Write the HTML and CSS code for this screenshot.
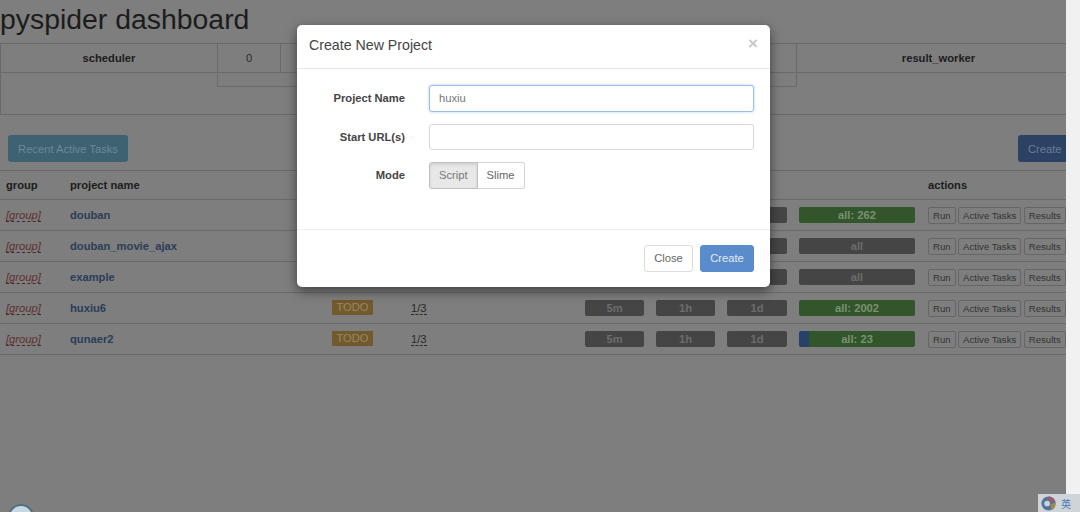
FILE: index.html
```html
<!DOCTYPE html>
<html lang="en">
<head>
<meta charset="utf-8">
<title>pyspider dashboard</title>
<link rel="stylesheet" href="styles.css">
</head>
<body>
<div class="viewport">
  <div class="page">
    <h1 class="title">pyspider dashboard</h1>
    <div class="queues">
      <div class="queue-head">
        <div class="q-name">scheduler</div>
        <div class="q-num">0</div>
        <div class="q-mid"></div>
        <div class="q-name q-last">result_worker</div>
      </div>
      <div class="queue-body">
        <div class="q-sub"></div>
      </div>
    </div>
    <div class="toolbar">
      <button class="btn btn-info">Recent Active Tasks</button>
      <button class="btn btn-primary btn-cut">Create</button>
    </div>
    <div class="projects">
      <div class="row row-head">
        <div>group</div><div>project name</div><div></div><div></div><div></div><div>actions</div>
      </div>
      <div class="row">
        <div><span class="group">[group]</span></div><div class="pname">douban</div>
        <div><span class="todo">TODO</span></div><div><span class="rate">1/3</span></div>
        <div class="bars"><span class="bar">5m</span><span class="bar">1h</span><span class="bar">1d</span><span class="bar bar-all">all: 262</span></div>
        <div class="acts"><span class="act">Run</span><span class="act">Active Tasks</span><span class="act">Results</span></div>
      </div>
      <div class="row">
        <div><span class="group">[group]</span></div><div class="pname">douban_movie_ajax</div>
        <div><span class="todo">TODO</span></div><div><span class="rate">1/3</span></div>
        <div class="bars"><span class="bar">5m</span><span class="bar">1h</span><span class="bar">1d</span><span class="bar bar-wide">all</span></div>
        <div class="acts"><span class="act">Run</span><span class="act">Active Tasks</span><span class="act">Results</span></div>
      </div>
      <div class="row">
        <div><span class="group">[group]</span></div><div class="pname">example</div>
        <div><span class="todo">TODO</span></div><div><span class="rate">1/3</span></div>
        <div class="bars"><span class="bar">5m</span><span class="bar">1h</span><span class="bar">1d</span><span class="bar bar-wide">all</span></div>
        <div class="acts"><span class="act">Run</span><span class="act">Active Tasks</span><span class="act">Results</span></div>
      </div>
      <div class="row">
        <div><span class="group">[group]</span></div><div class="pname">huxiu6</div>
        <div><span class="todo">TODO</span></div><div><span class="rate">1/3</span></div>
        <div class="bars"><span class="bar">5m</span><span class="bar">1h</span><span class="bar">1d</span><span class="bar bar-all">all: 2002</span></div>
        <div class="acts"><span class="act">Run</span><span class="act">Active Tasks</span><span class="act">Results</span></div>
      </div>
      <div class="row">
        <div><span class="group">[group]</span></div><div class="pname">qunaer2</div>
        <div><span class="todo">TODO</span></div><div><span class="rate">1/3</span></div>
        <div class="bars"><span class="bar">5m</span><span class="bar">1h</span><span class="bar">1d</span><span class="bar bar-all bar-split">all: 23</span></div>
        <div class="acts"><span class="act">Run</span><span class="act">Active Tasks</span><span class="act">Results</span></div>
      </div>
    </div>
    <div class="modal">
      <div class="modal-head">
        <div class="modal-title">Create New Project</div>
        <div class="modal-x">×</div>
      </div>
      <div class="modal-body">
        <div class="field"><label class="flabel">Project Name</label><input class="input input-focus" value="huxiu"></div>
        <div class="field"><label class="flabel">Start URL(s)</label><input class="input"></div>
        <div class="field"><label class="flabel">Mode</label>
          <div class="segs"><span class="seg seg-on">Script</span><span class="seg">Slime</span></div>
        </div>
      </div>
      <div class="modal-foot">
        <button class="mbtn mbtn-close">Close</button>
        <button class="mbtn mbtn-primary">Create</button>
      </div>
    </div>
    <svg class="corner-globe" width="30" height="8" viewBox="0 0 30 8"><circle cx="15" cy="13" r="12" fill="#c6d8e2" stroke="#54707e" stroke-width="2"/></svg>
  </div>
  <div class="gutter">
    <div class="ime">
      <svg width="19" height="17" viewBox="0 0 20 16"><circle cx="9" cy="8" r="7.5" fill="#51749c"/><path d="M9 .5a7.5 7.5 0 0 1 6.5 4l-4 3-2.500-3z" fill="#a9556a"/><path d="M11 9l5-2a7.500 7.500 0 0 1-4 8z" fill="#a08a4c"/><circle cx="7.500" cy="8" r="3" fill="#c7d3de"/></svg>
      <span class="ime-t">英</span>
    </div>
  </div>
</div>
</body>
</html>
```
FILE: styles.css
```css
* { box-sizing: border-box; }
html, body { margin: 0; height: 100%; overflow: hidden; }
body { font-family: "Liberation Sans", Arial, sans-serif; font-size: 11.2px; color: #2a2a2a; background: #f1f1f1; }
.viewport { display: flex; width: 1080px; height: 512px; }
.page { position: relative; width: 1066px; height: 512px; background: #7e7e7e; overflow: hidden; flex: none; }
.gutter { flex: 1; background: #f1f1f1; position: relative; }
.title { margin: 0; height: 43px; font-size: 28.4px; font-weight: 400; line-height: 39px; color: #1c1c1c; }
.queues { height: 72px; border-bottom: 1px solid #6a6a6a; border-left: 1px solid #6a6a6a; }
.queue-head { display: flex; height: 30px; border-top: 1px solid #6a6a6a; border-bottom: 1px solid #6a6a6a; }
.q-name { width: 216px; flex: none; display: flex; align-items: center; justify-content: center; font-weight: 700; color: #1c1c1c; }
.q-num { width: 64px; flex: none; border-left: 1px solid #6a6a6a; border-right: 1px solid #6a6a6a; display: flex; align-items: center; justify-content: center; color: #2a2a2a; }
.q-mid { width: 515px; flex: none; }
.q-last { width: 284px; border-left: 1px solid #6a6a6a; }
.queue-body { height: 42px; padding-left: 216px; }
.q-sub { height: 14px; width: 580px; border: 1px solid #6a6a6a; border-top: 0; }
.toolbar { display: flex; justify-content: space-between; padding: 20px 0 0 8px; height: 55px; }
.btn { height: 27px; border: 0; border-radius: 3px; font: 11.2px "Liberation Sans", Arial, sans-serif; padding: 0; }
.btn-info { width: 120px; background: #3f6272; color: #6a8897; }
.btn-primary { background: #2b4264; color: #6a7d9b; }
.btn-cut { width: 48px; border-radius: 3px 0 0 3px; text-align: left; padding-left: 10px; }
.row { display: grid; grid-template-columns: 64px 262px 79px 174px 343px 1fr; height: 31px; padding-bottom: 1px; border-bottom: 1px solid #6a6a6a; align-items: center; padding-left: 6px; }
.row-head { height: 30px; padding-bottom: 0; border-top: 1px solid #6a6a6a; font-weight: 700; color: #1c1c1c; }
.group { color: #5f2f33; font-style: italic; border-bottom: 1px dashed #4a2528; }
.pname { color: #2b3d58; font-weight: 700; }
.todo { display: inline-block; width: 41px; height: 15px; line-height: 15px; text-align: center; background: #735a2c; color: #978865; }
.rate { border-bottom: 1px dashed #2a2a2a; }
.bars { display: flex; gap: 12px; font-weight: 700; color: #6c6c6c; }
.bar { width: 59px; height: 16px; line-height: 16px; text-align: center; background: #454545; border-radius: 2px; }
.bar:nth-child(3) { width: 60px; }
.bar-wide, .bar-all { width: 116px; }
.bar-all { background: #33552c; color: #7a9172; }
.bar-split { background: linear-gradient(to right, #26426a 10px, #33552c 10px); }
.acts { display: flex; gap: 2.5px; margin-top: 1px; }
.act { height: 17px; line-height: 15px; padding: 0 4px; border: 1px solid #666; border-radius: 2px; color: #333; font-size: 9.6px; }
.modal { position: absolute; left: 297px; top: 25px; width: 473px; height: 262px; background: #fff; border-radius: 5px; box-shadow: 0 4px 12px rgba(0,0,0,.5); }
.modal-head { display: flex; justify-content: space-between; height: 44px; padding: 12px 12px 0; border-bottom: 1px solid #e8e8e8; }
.modal-title { font-size: 14.2px; line-height: 17px; color: #444; }
.modal-x { font-size: 17px; font-weight: 700; line-height: 14px; color: #cacaca; }
.modal-body { height: 160px; padding-top: 16px; display: flex; flex-direction: column; gap: 12px; }
.field { display: flex; align-items: center; height: 26.5px; }
.flabel { width: 108px; text-align: right; font-weight: 700; margin-right: 24px; color: #444; }
.input { width: 325px; height: 26.500px; border: 1px solid #d8d8d8; border-radius: 3px; padding: 0 9px; font: 11.2px "Liberation Sans", Arial, sans-serif; color: #777; background: #fff; outline: 0; }
.input-focus { border-color: #9dbde6; box-shadow: 0 0 3px rgba(102,175,233,.5); }
.segs { display: flex; }
.seg { height: 27px; line-height: 25px; border: 1px solid #d4d4d4; padding: 0 9px; color: #666; background: #fff; }
.seg:first-child { border-radius: 3px 0 0 3px; }
.seg:last-child { border-radius: 0 3px 3px 0; border-left: 0; }
.seg-on { background: #e8e8e8; border-color: #c0c0c0; color: #777; box-shadow: inset 0 2px 3px rgba(0,0,0,.1); }
.modal-foot { display: flex; justify-content: flex-end; gap: 7px; padding: 14.5px 16px 0; border-top: 1px solid #eee; }
.mbtn { height: 27px; padding: 0; border: 1px solid #ddd; border-radius: 3px; background: #fff; color: #666; font: 11.2px "Liberation Sans", Arial, sans-serif; }
.mbtn-close { width: 49px; }
.mbtn-primary { width: 54px; background: #5a8ccb; border-color: #5a8ccb; color: #e2ebf7; }
.corner-globe { position: absolute; left: 6px; bottom: 0; }
.ime { position: absolute; right: 0; bottom: 0; display: flex; align-items: center; gap: 2px; padding: 0 2px; width: 42px; height: 18px; background: #cfd4d8; }
.ime-t { font-family: "Noto Sans CJK SC", sans-serif; font-size: 10px; color: #4a78b8; }
```
